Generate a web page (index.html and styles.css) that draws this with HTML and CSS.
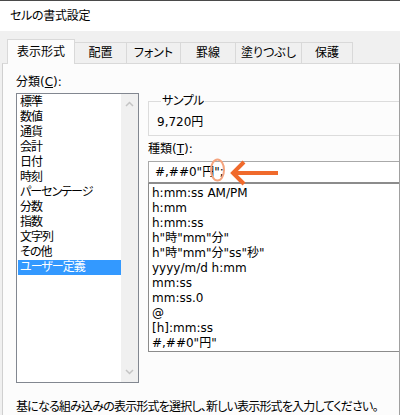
FILE: index.html
```html
<!DOCTYPE html>
<html lang="ja">
<head>
<meta charset="utf-8">
<title>セルの書式設定</title>
<link rel="stylesheet" href="styles.css">
</head>
<body>
<div class="dialog">
  <div class="titlebar">セルの書式設定</div>
  <div class="tabs">
    <div class="tab active">表示形式</div>
    <div class="tab">配置</div>
    <div class="tab">フォント</div>
    <div class="tab">罫線</div>
    <div class="tab">塗りつぶし</div>
    <div class="tab">保護</div>
  </div>
  <div class="panel">
    <div class="cols">
      <div class="left">
        <div class="label">分類(<u>C</u>):</div>
        <div class="catlist">
          <div class="items">
            <div class="item">標準</div>
            <div class="item">数値</div>
            <div class="item">通貨</div>
            <div class="item">会計</div>
            <div class="item">日付</div>
            <div class="item">時刻</div>
            <div class="item">パーセンテージ</div>
            <div class="item">分数</div>
            <div class="item">指数</div>
            <div class="item">文字列</div>
            <div class="item">その他</div>
            <div class="item selected">ユーザー定義</div>
          </div>
          <div class="scrollbar">
            <svg width="9" height="6" viewBox="0 0 9 6"><path d="M1 5 L4.5 1.5 L8 5" fill="none" stroke="#c4c4c4" stroke-width="1.5"/></svg>
            <svg width="9" height="6" viewBox="0 0 9 6"><path d="M1 1 L4.5 4.5 L8 1" fill="none" stroke="#c4c4c4" stroke-width="1.5"/></svg>
          </div>
        </div>
      </div>
      <div class="right">
        <fieldset class="sample">
          <legend>サンプル</legend>
          <div class="sample-value">9,720円</div>
        </fieldset>
        <div class="label type-label">種類(<u>T</u>):</div>
        <div class="input">#,##0"円";
          <svg class="annot" width="80" height="32" viewBox="0 0 80 32">
            <ellipse cx="9.5" cy="13" rx="6.5" ry="10.5" fill="none" stroke="#f5a47e" stroke-width="2"/>
            <path d="M26 16 H70" stroke="#f06a2c" stroke-width="4" fill="none"/>
            <path d="M36 5 L25 16 L36 27" stroke="#f06a2c" stroke-width="4" fill="none" stroke-linejoin="miter"/>
          </svg>
        </div>
        <div class="fmtlist">
          <div class="fmt">h:mm:ss AM/PM</div>
          <div class="fmt">h:mm</div>
          <div class="fmt">h:mm:ss</div>
          <div class="fmt">h"時"mm"分"</div>
          <div class="fmt">h"時"mm"分"ss"秒"</div>
          <div class="fmt">yyyy/m/d h:mm</div>
          <div class="fmt">mm:ss</div>
          <div class="fmt">mm:ss.0</div>
          <div class="fmt">@</div>
          <div class="fmt">[h]:mm:ss</div>
          <div class="fmt">#,##0"円"</div>
        </div>
      </div>
    </div>
    <div class="hint">基になる組み込みの表示形式を選択し、新しい表示形式を入力してください。</div>
  </div>
</div>
</body>
</html>
```
FILE: styles.css
```css
html, body {
  margin: 0;
  padding: 0;
  background: #fff;
}

.dialog {
  width: 400px;
  height: 415px;
  overflow: hidden;
  box-sizing: border-box;
  border-top: 1px solid #4a4a4a;
  display: flex;
  flex-direction: column;
  background: #f0f0f0;
  font-family: "DejaVu Sans", "Noto Sans CJK JP", sans-serif;
  font-size: 12px;
  font-feature-settings: "palt";
  color: #000;
}

.titlebar {
  flex: none;
  height: 30px;
  line-height: 30px;
  padding-left: 10px;
  background: #fff;
  letter-spacing: -0.3px;
}

.tabs {
  flex: none;
  height: 32px;
  display: flex;
  align-items: flex-end;
  padding-left: 7px;
  position: relative;
  z-index: 1;
}

.tab {
  box-sizing: border-box;
  height: 21px;
  line-height: 20px;
  text-align: center;
  border: 1px solid #d9d9d9;
  border-bottom: none;
  margin-right: -1px;
  background: #f0f0f0;
}

.tab:nth-child(1) { width: 68px; }
.tab:nth-child(2) { width: 53px; }
.tab:nth-child(3) { width: 55px; }
.tab:nth-child(4) { width: 56px; }
.tab:nth-child(5) { width: 67px; }
.tab:nth-child(6) { width: 52px; }

.tab.active {
  height: 25px;
  line-height: 25px;
  margin-bottom: -1px;
  background: #fcfcfc;
  position: relative;
  z-index: 2;
}

.panel {
  flex: 1;
  margin-left: 2px;
  background: #fcfcfc;
  border-top: 1px solid #d9d9d9;
  border-left: 1px solid #d0d0d0;
  border-right: 1px solid #a0a0a0;
  padding: 11px 0 0 13px;
  overflow: hidden;
}

.cols {
  display: flex;
  gap: 9px;
}

.left {
  flex: none;
  width: 123px;
}

.label {
  height: 15px;
  line-height: 15px;
}

.catlist {
  box-sizing: border-box;
  margin-top: 3px;
  height: 290px;
  border: 1px solid #828790;
  background: #fff;
  display: flex;
}

.items {
  flex: 1;
  padding: 1px 0 0 1px;
}

.item {
  height: 15px;
  line-height: 15px;
  padding-left: 2px;
  white-space: nowrap;
  letter-spacing: -1px;
}

.item.selected {
  background: #3399ff;
  color: #fff;
}

.scrollbar {
  flex: none;
  width: 17px;
  background: #f0f0f0;
  display: flex;
  flex-direction: column;
  justify-content: space-between;
  align-items: center;
  padding: 7px 0 7px;
}

.scrollbar svg {
  display: block;
}

.right {
  flex: 1;
  margin-top: 19px;
  min-width: 0;
}

.sample {
  margin: 0;
  padding: 0 0 5px 8px;
  border: 1px solid #dcdcdc;
  border-right: none;
}

.sample legend {
  margin-left: 4px;
  padding: 0 1px;
  height: 15px;
  line-height: 15px;
  letter-spacing: -0.5px;
}

.sample-value {
  margin-top: 6px;
  height: 15px;
  line-height: 15px;
}

.type-label {
  margin-top: 6px;
}

.input {
  position: relative;
  box-sizing: border-box;
  margin-top: 4px;
  height: 22px;
  line-height: 20px;
  padding-left: 6px;
  border: 1px solid #a9a9a9;
  border-bottom-color: #8c8c8c;
  border-right: none;
  background: #fff;
  white-space: nowrap;
}

.annot {
  position: absolute;
  left: 59px;
  top: -5px;
  overflow: visible;
}

.fmtlist {
  box-sizing: border-box;
  height: 169px;
  border: 1px solid #8c8c8c;
  border-right: none;
  background: #fff;
  padding: 2px 0 0 3px;
  overflow: hidden;
}

.fmt {
  height: 15px;
  line-height: 15px;
  white-space: nowrap;
}

.hint {
  margin-top: 17px;
  height: 15px;
  line-height: 15px;
  white-space: nowrap;
  letter-spacing: -0.8px;
}
```
